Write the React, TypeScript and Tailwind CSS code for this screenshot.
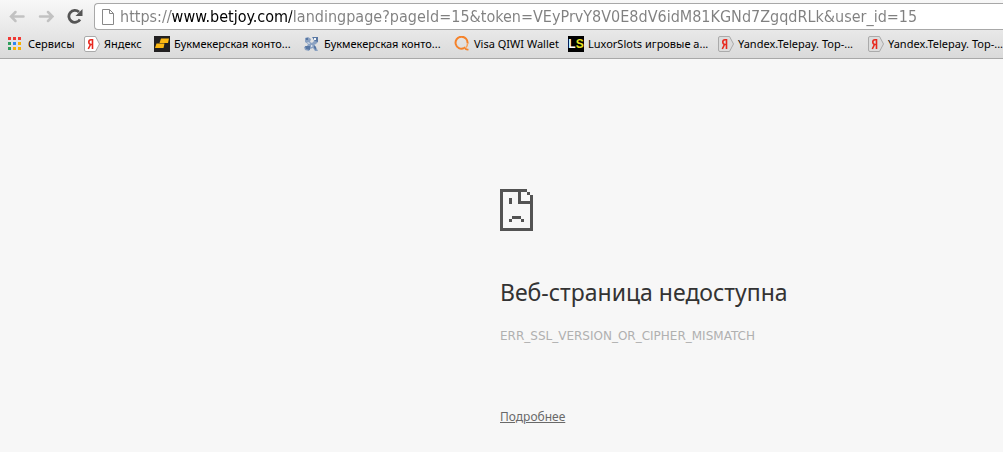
import type { ReactNode } from 'react';

const url =
  'https://www.betjoy.com/landingpage?pageId=15&token=VEyPrvY8V0E8dV6idM81KGNd7ZgqdRLk&user_id=15';

function AppsIcon() {
  const dots = ['#f03a35', '#f03a35', '#f03a35', '#2e9e5b', '#2f86f0', '#f8b000', '#2e9e5b', '#f8b000', '#f8b000'];
  return (
    <svg width="16" height="14" viewBox="0 0 16 14" className="shrink-0" shapeRendering="crispEdges">
      {dots.map((c, i) => (
        <rect key={i} x={(i % 3) * 5} y={Math.floor(i / 3) * 5} width="3" height="3" fill={c} />
      ))}
    </svg>
  );
}

function YandexIcon({ metal = false }: { metal?: boolean }) {
  return (
    <svg width="16" height="16" viewBox="0 0 16 16" className="shrink-0">
      <path d="M.5 2A1.500 1.500 0 0 1 2 .5H11.500L15.500 8L11.500 15.500H2A1.500 1.500 0 0 1 .5 14Z" fill={metal ? '#dcdcdc' : '#fff'} stroke="#aaa" />
      <path d="M8.500 13V3.700H7Q4.800 3.700 4.800 6T7 8.500H8.500M6.500 8.500L4.300 13" fill="none" stroke="#e8281e" strokeWidth="1.600" />
    </svg>
  );
}

function BetIcon() {
  return (
    <svg width="16" height="16" viewBox="0 0 16 16" className="shrink-0">
      <rect width="16" height="16" fill="#222021" />
      <path d="M7 2.500H15L14 7H5.500Z" fill="#fdb813" />
      <path d="M2.500 7.500H10.500L9.500 12H1Z" fill="#fdb813" />
    </svg>
  );
}

function PlayersIcon() {
  return (
    <svg width="16" height="16" viewBox="0 0 16 16" className="shrink-0">
      <path d="M1 2l3-1 3 2-1 3 2 1 2-2-1-3 5-1v5l-2 2-2 1 2 2 2 4h-3l-2-3-3 1-1 2-4-1-1-3 3-1 1-2-3-2z" fill="#8ba2c2" />
      <path d="M8 1h6v5l-3-1zM1 10h5v4l-4-1zM2 2h2v2H2zM10 9l2 2v3l-2-2z" fill="#5877a3" />
      <path d="M10 2h2v2h-2zM3 6l3 1-1 1zM7 9l2 1-2 1z" fill="#f0f3f7" />
    </svg>
  );
}

function QiwiIcon() {
  return (
    <svg width="16" height="16" viewBox="0 0 16 16" className="shrink-0" fill="none">
      <path d="M10 12.200A6 6 0 1 1 13.500 7.500" stroke="#f5822a" strokeWidth="2" />
      <path d="M13.500 7.500Q13.500 10 12 11.500" stroke="#f9a25a" strokeWidth="1.500" />
      <path d="M10 11Q12 14.200 14.500 13.500" stroke="#f5822a" strokeWidth="1.600" />
    </svg>
  );
}

function LuxorIcon() {
  return (
    <span className="flex size-4 shrink-0 items-center justify-center bg-black font-['Liberation_Sans',sans-serif] text-[12px] font-bold leading-4 text-white">
      L<span className="text-[#e8e020]">S</span>
    </span>
  );
}

const bookmarks: { label: string; icon: ReactNode; width: string }[] = [
  { label: 'Сервисы', icon: <AppsIcon />, width: 'w-[76px]' },
  { label: 'Яндекс', icon: <YandexIcon />, width: 'w-[70px]' },
  { label: 'Букмекерская конто...', icon: <BetIcon />, width: 'w-[150px]' },
  { label: 'Букмекерская конто...', icon: <PlayersIcon />, width: 'w-[150px]' },
  { label: 'Visa QIWI Wallet', icon: <QiwiIcon />, width: 'w-[114px]' },
  { label: 'LuxorSlots игровые а...', icon: <LuxorIcon />, width: 'w-[150px]' },
  { label: 'Yandex.Telepay. Top-...', icon: <YandexIcon metal />, width: 'w-[150px]' },
  { label: 'Yandex.Telepay. Top-...', icon: <YandexIcon metal />, width: 'w-[150px]' },
];

export default function App() {
  return (
    <div className="min-h-screen overflow-hidden bg-[#f7f7f7] font-['Noto_Sans',sans-serif]">
      <header className="border-b border-[#a8a8a8] bg-linear-to-b from-[#f8f8f8] to-[#dadada]">
        <div className="flex h-[30px] items-end pl-2">
          <button aria-label="Назад" className="mr-3 mb-1.5">
            <svg width="17" height="15" viewBox="0 0 17 15" fill="none" stroke="#c2c2c2" strokeWidth="2.500" strokeLinecap="round">
              <path d="M7.500 3L3 7.500L7.500 12M3 7.500H15.500" />
            </svg>
          </button>
          <button aria-label="Вперёд" className="mr-3 mb-1.5">
            <svg width="17" height="15" viewBox="0 0 17 15" fill="none" stroke="#c2c2c2" strokeWidth="2.500" strokeLinecap="round">
              <path d="M11 3L15.500 7.500L11 12M15.500 7.500H3" />
            </svg>
          </button>
          <button aria-label="Обновить" className="mr-[11px] mb-1.5">
            <svg width="17" height="16" viewBox="0 0 17 16" fill="none" stroke="#555" strokeWidth="2.800">
              <path d="M14 11.500A6 6 0 1 1 13 4" />
              <path d="M16.500 1V8H9.500Z" fill="#555" stroke="none" />
            </svg>
          </button>
          <label className="flex h-[27px] min-w-0 grow items-center gap-[6px] rounded-l-sm border border-r-0 border-[#a8a8a8] bg-white pl-[7px]">
            <svg width="12" height="16" viewBox="0 0 12 16" className="shrink-0" fill="#fff" stroke="#888">
              <path d="M.5 .5H7.500L11.500 4.500V15.500H.5ZM7.500 .5V4.500H11.500" />
            </svg>
            <input
              aria-label="Адрес"
              defaultValue={url}
              className="min-w-0 grow bg-[linear-gradient(to_right,#808080_51px,#000_51px,#000_172px,#808080_172px)] bg-clip-text font-['DejaVu_Sans_Condensed','DejaVu_Sans',sans-serif] text-[16px] leading-[24px] text-transparent outline-none"
            />
          </label>
        </div>
        <nav className="flex h-7 items-center pl-2 text-[11px] leading-4 text-black">
          {bookmarks.map((b, i) => (
            <a key={i} href="#" className={`flex shrink-0 items-center gap-1 whitespace-nowrap ${b.width}`}>
              {b.icon}
              {b.label}
            </a>
          ))}
        </nav>
      </header>
      <main className="pt-[130px] pl-[500px]">
        <svg width="33" height="42" viewBox="0 0 11 14" fill="#535353" shapeRendering="crispEdges">
          <path d="M0 0H9V1H7V4H11V5H6V1H1V13H10V5H11V14H0ZM9 1h1v1H9ZM10 2h1v3h-1ZM3 3h1v2H3ZM4 9h3v1H4ZM3 10h1v1H3ZM7 10h1v1H7Z" />
        </svg>
        <h1 className="mt-[45px] text-[23px] leading-8 text-[#333]">Веб-страница недоступна</h1>
        <p className="mt-[20px] font-['DejaVu_Sans',sans-serif] text-[12px] leading-4 text-[#b0b0b0]">
          ERR_SSL_VERSION_OR_CIPHER_MISMATCH
        </p>
        <a href="#" className="mt-[65px] inline-block text-[12px] leading-4 text-[#696969] underline">
          Подробнее
        </a>
      </main>
    </div>
  );
}
